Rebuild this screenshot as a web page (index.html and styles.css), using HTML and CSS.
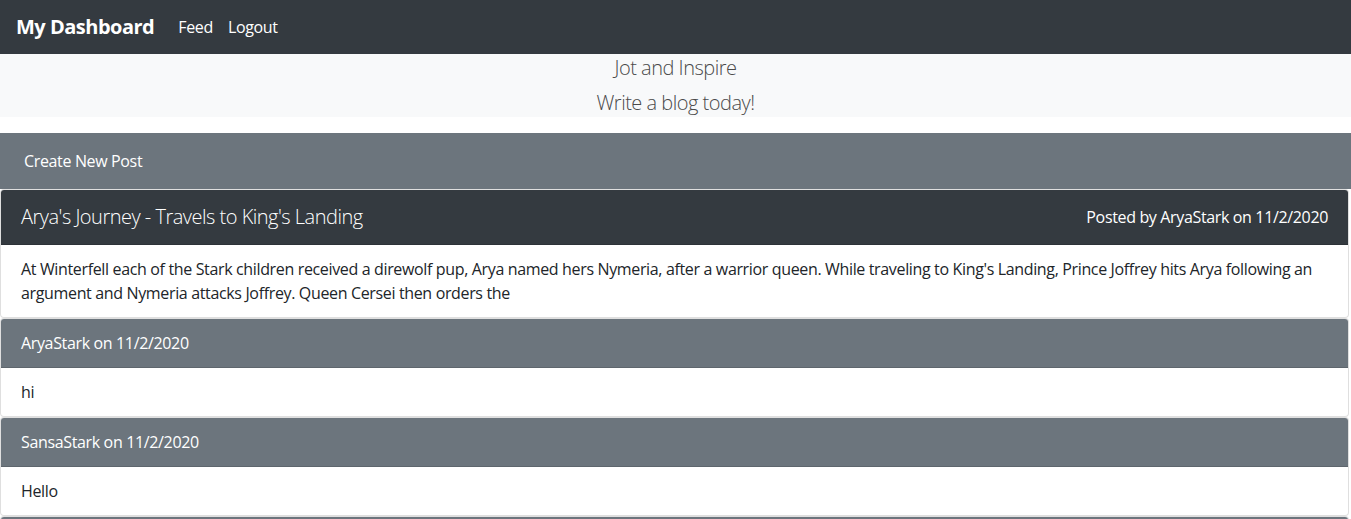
FILE: index.html
```html
<!DOCTYPE html>
<html lang="en">
<head>
<meta charset="utf-8">
<title>My Dashboard</title>
<link rel="stylesheet" href="styles.css">
</head>
<body>
<nav class="navbar">
  <a class="brand" href="#">My Dashboard</a>
  <a class="nav-link" href="#">Feed</a>
  <a class="nav-link" href="#">Logout</a>
</nav>
<header class="hero">
  <p class="lead">Jot and Inspire</p>
  <p class="lead">Write a blog today!</p>
</header>
<main class="content">
  <div class="create-bar">Create New Post</div>
  <article class="card post">
    <div class="card-header dark">
      <h2 class="post-title">Arya's Journey - Travels to King's Landing</h2>
      <span class="post-meta">Posted by AryaStark on 11/2/2020</span>
    </div>
    <div class="card-body">At Winterfell each of the Stark children received a direwolf pup, Arya named hers Nymeria, after a warrior queen. While traveling to King's Landing, Prince Joffrey hits Arya following an argument and Nymeria attacks Joffrey. Queen Cersei then orders the</div>
  </article>
  <section class="card comment">
    <div class="card-header grey">AryaStark on 11/2/2020</div>
    <div class="card-body">hi</div>
  </section>
  <section class="card comment">
    <div class="card-header grey">SansaStark on 11/2/2020</div>
    <div class="card-body">Hello</div>
  </section>
  <section class="card comment">
    <div class="card-header grey"></div>
  </section>
</main>
</body>
</html>
```
FILE: styles.css
```css
* { box-sizing: border-box; }
html, body { margin: 0; padding: 0; }
body {
  font-family: "Open Sans", "Noto Sans", sans-serif;
  font-size: 16px;
  line-height: 24px;
  letter-spacing: -0.35px;
  color: #212529;
  background: #fff;
  overflow: hidden;
}
a { text-decoration: none; }
.navbar {
  height: 54px;
  background: #343a40;
  display: flex;
  align-items: center;
  padding: 0 16px 1px;
}
.brand {
  color: #fff;
  font-weight: 700;
  font-size: 20px;
  letter-spacing: -0.5px;
  margin-right: 24px;
}
.nav-link {
  color: #fff;
  font-size: 16px;
  margin-right: 15px;
}
.hero {
  background: #f8f9fa;
  height: 63px;
  display: flex;
  flex-direction: column;
  align-items: center;
}
.lead {
  margin: 0;
  font-size: 20px;
  font-weight: 300;
  line-height: 28px;
  letter-spacing: -0.5px;
  color: #4a4a4a;
}
.lead + .lead { margin-top: 7px; }
.content { margin-top: 16px; }
.create-bar {
  background: #6c757d;
  color: #fff;
  height: 56px;
  display: flex;
  align-items: center;
  padding: 0 24px;
}
.card {
  width: calc(100% - 2px);
  border: 1px solid rgba(0,0,0,.125);
  border-radius: 4px;
  background: #fff;
  overflow: hidden;
}
.card-header {
  color: #fff;
  padding: 0 20px;
  display: flex;
  align-items: center;
  justify-content: space-between;
  border-bottom: 1px solid rgba(0,0,0,.125);
}
.card-header.dark { background: #343a40; height: 55px; }
.card-header.grey { background: #6c757d; height: 49px; }
.post-title {
  margin: 0;
  font-size: 20px;
  font-weight: 300;
  line-height: 28px;
  letter-spacing: -0.5px;
}
.card-body { padding: 12px 20px; }
.comment .card-body { height: 48px; }
```
